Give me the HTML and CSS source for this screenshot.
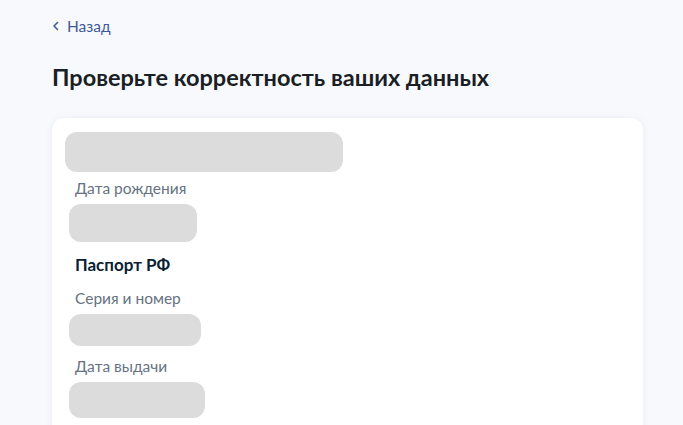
FILE: index.html
```html
<!DOCTYPE html>
<html lang="ru">

<head>
    <meta charset="UTF-8">
    <meta name="viewport" content="width=device-width, initial-scale=1.0">
    <title>Проверьте корректность ваших данных</title>

    <link rel="stylesheet" href="styles.css">
</head>

<body>
    <div class="page">
        <a class="back-link" href="#">
            <svg class="back-icon" width="8" height="10" viewBox="0 0 8 10">
                <path d="M5.5 1.5 L2 5 L5.5 8.5" fill="none" stroke="#3d5a99" stroke-width="1.6" stroke-linecap="round" stroke-linejoin="round"/>
            </svg>
            <span>Назад</span>
        </a>
        <h1>Проверьте корректность ваших данных</h1>

        <div class="card">
            <div class="skeleton skeleton-name"></div>
            <div class="field-label">Дата рождения</div>
            <div class="skeleton skeleton-birth"></div>

            <div class="section-title">Паспорт РФ</div>
            <div class="field-label">Серия и номер</div>
            <div class="skeleton skeleton-number"></div>
            <div class="field-label field-label-spaced">Дата выдачи</div>
            <div class="skeleton skeleton-date"></div>
        </div>
    </div>
</body>

</html>
```

FILE: styles.css
```css
body {
    margin: 0;
    background-color: #f8f9fc;
    font-family: Lato, "Open Sans", sans-serif;
    color: #0b1f33;
    overflow: hidden;
}

.page {
    padding: 0 40px 0 52px;
}

.back-link {
    display: flex;
    align-items: center;
    gap: 7px;
    padding-top: 16px;
    height: 20px;
    font-size: 15.5px;
    color: #3d5a99;
    text-decoration: none;
}

.back-icon {
    display: block;
}

h1 {
    margin: 26px 0 0 0;
    font-size: 23.5px;
    line-height: 30px;
    font-weight: 700;
    color: #1a1f26;
}

.card {
    margin-top: 26px;
    background-color: white;
    border-radius: 12px;
    box-shadow: 0 1px 6px rgba(200, 210, 230, 0.35);
    padding: 14px 13px 10px 13px;
    height: 300px;
}

.skeleton {
    background-color: #dcdcdc;
    border-radius: 12px;
    margin-left: 4px;
}

.skeleton-name {
    width: 278px;
    height: 40px;
    margin-left: 0;
}

.skeleton-birth {
    width: 128px;
    height: 38px;
}

.skeleton-number {
    width: 132px;
    height: 32px;
}

.skeleton-date {
    width: 136px;
    height: 36px;
}

.field-label {
    margin-left: 10px;
    font-size: 15.5px;
    line-height: 20px;
    color: #66727f;
    padding: 6px 0;
}

.field-label-spaced {
    padding-top: 10px;
}

.section-title {
    margin-left: 10px;
    font-size: 17px;
    font-weight: 700;
    line-height: 22px;
    padding: 12px 0 6px 0;
    color: #0b1f33;
}
```
